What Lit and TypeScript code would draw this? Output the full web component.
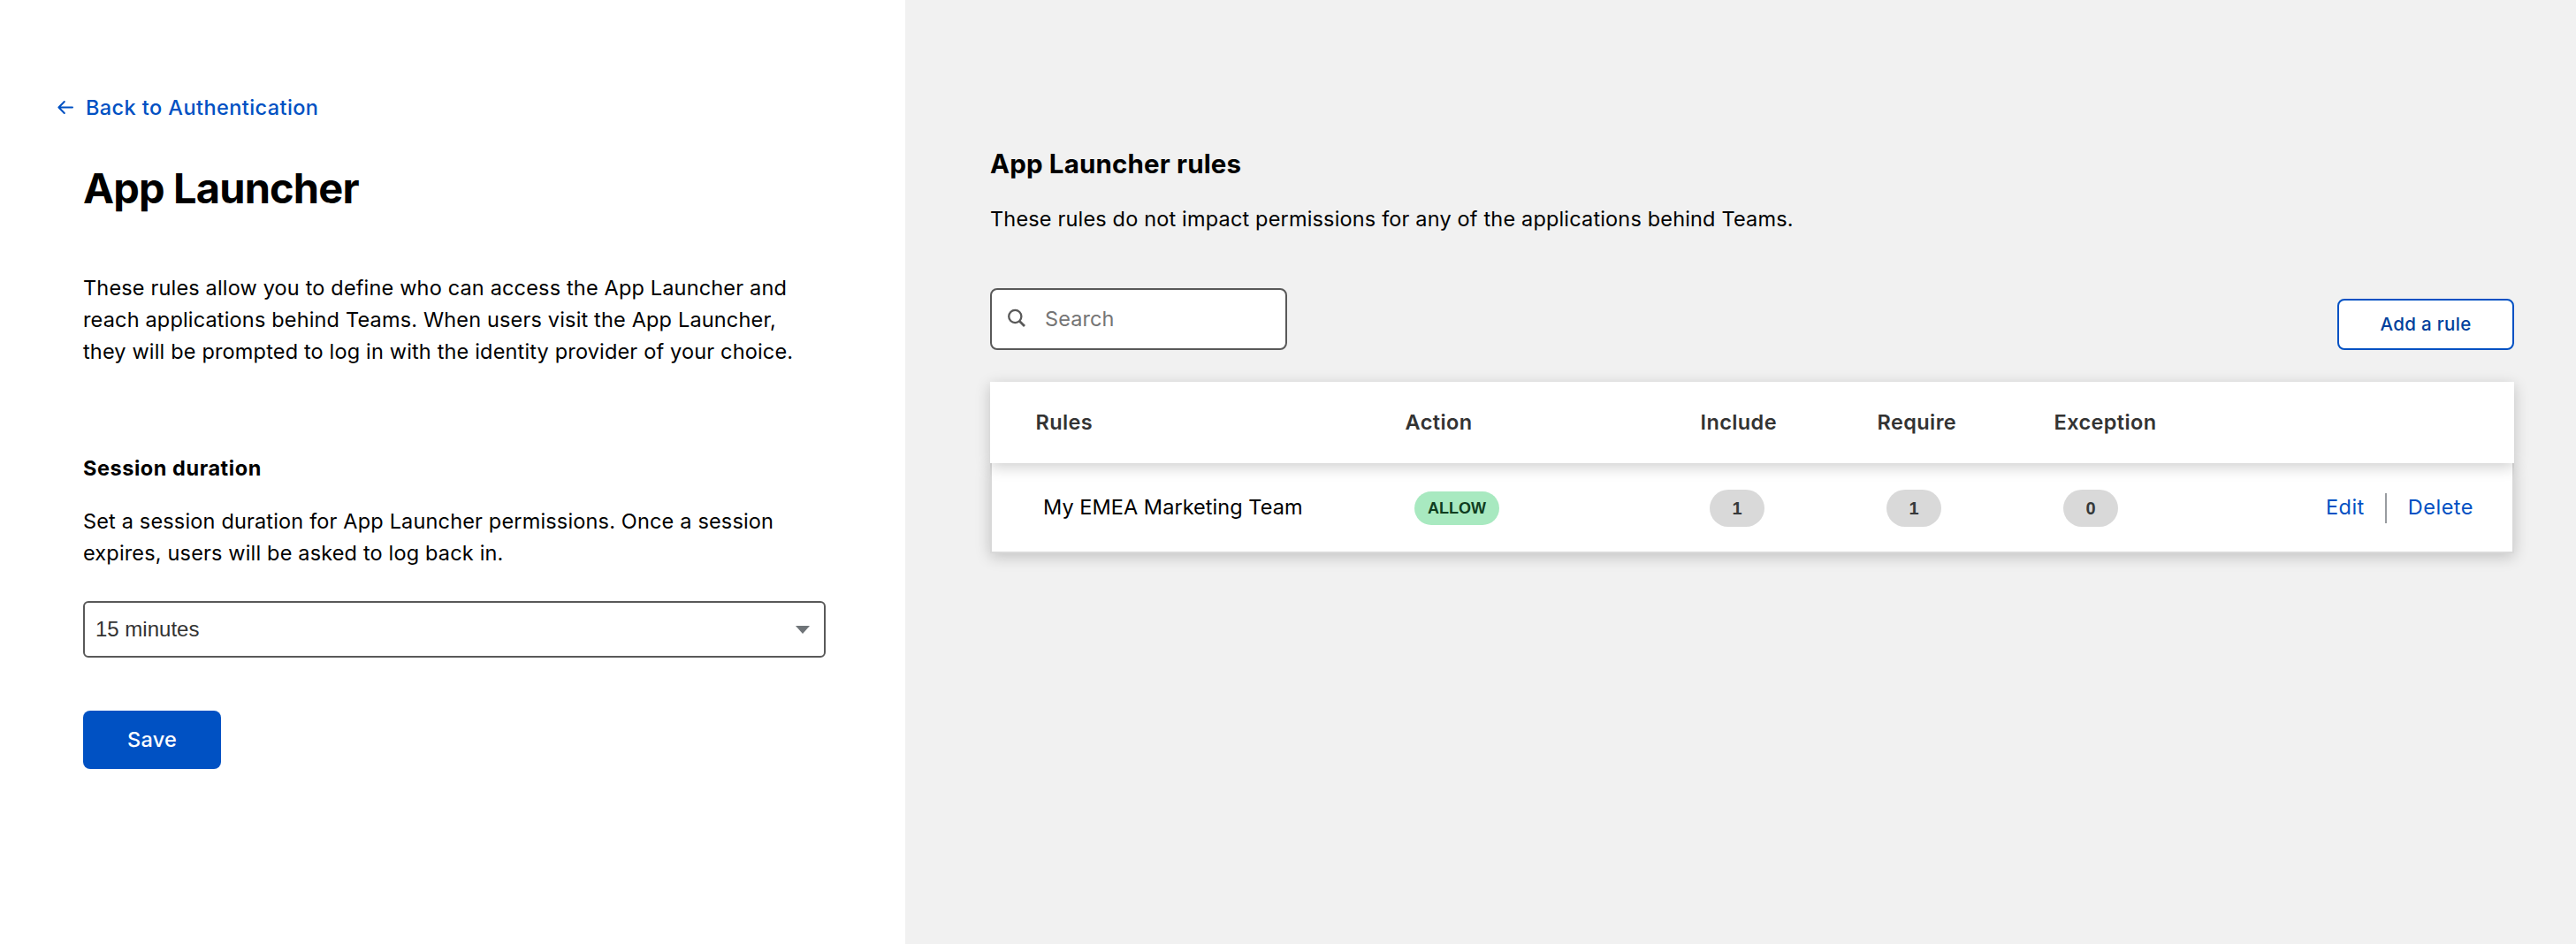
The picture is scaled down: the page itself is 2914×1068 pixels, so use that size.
import { LitElement, html, css } from "lit";
import { customElement, state } from "lit/decorators.js";

interface Rule {
  name: string;
  action: string;
  include: number;
  require: number;
  exception: number;
}

@customElement("session-panel")
export class SessionPanel extends LitElement {
  static styles = css`
    :host {
      display: block;
      background: #fff;
      padding: 104px 90px 0 94px;
      letter-spacing: 0.165px;
    }
    * { box-sizing: border-box; }
    h1, h2, p { margin: 0; }
    .back {
      display: flex;
      align-items: center;
      gap: 13px;
      margin-left: -30px;
      height: 36px;
      color: #0051c3;
      font-weight: 500;
      letter-spacing: 0.42px;
      text-decoration: none;
    }
    .arrow { display: block; width: 20px; height: 20px; }
    h1 {
      margin-top: 45px;
      font-size: 47px;
      line-height: 56px;
      font-weight: 700;
      letter-spacing: -0.85px;
    }
    .intro { margin-top: 67px; white-space: nowrap; }
    h2 {
      margin-top: 96px;
      font-size: inherit;
      font-weight: 700;
      letter-spacing: 0.55px;
    }
    .help { margin-top: 24px; white-space: nowrap; }
    .select {
      display: flex;
      align-items: center;
      justify-content: space-between;
      margin-top: 36px;
      height: 64px;
      padding: 0 16px 0 12px;
      border: 2px solid #595959;
      border-radius: 6px;
      color: #333;
      font-family: "Liberation Sans", Arial, sans-serif;
      font-size: 24px;
      letter-spacing: 0;
    }
    .caret { display: block; width: 16px; height: 9px; }
    .save {
      display: block;
      margin-top: 60px;
      width: 156px;
      height: 66px;
      padding: 0;
      border: 0;
      border-radius: 8px;
      background: #0051c3;
      color: #fff;
      font: inherit;
      font-weight: 500;
      letter-spacing: 0.2px;
    }
  `;

  render() {
    return html`
      <a class="back">
        <svg class="arrow" viewBox="0 0 20 20" fill="none" stroke="#0051c3" stroke-width="2" stroke-linecap="round" stroke-linejoin="round">
          <path d="M18 9.5H2.4M8.8 3 2.4 9.5 8.8 16"></path>
        </svg>
        <span>Back to Authentication</span>
      </a>
      <h1>App Launcher</h1>
      <p class="intro">
        These rules allow you to define who can access the App Launcher and<br />
        reach applications behind Teams. When users visit the App Launcher,<br />
        they will be prompted to log in with the identity provider of your choice.
      </p>
      <h2>Session duration</h2>
      <p class="help">
        Set a session duration for App Launcher permissions. Once a session<br />
        expires, users will be asked to log back in.
      </p>
      <div class="select">
        <span>15 minutes</span>
        <svg class="caret" viewBox="0 0 16 9"><path d="M0 0H16L8 9Z" fill="#6f7478"></path></svg>
      </div>
      <button class="save">Save</button>
    `;
  }
}

@customElement("rules-panel")
export class RulesPanel extends LitElement {
  static styles = css`
    :host {
      display: block;
      background: #f1f1f1;
      padding: 167px 70px 0 96px;
      letter-spacing: 0.165px;
    }
    * { box-sizing: border-box; }
    h2, p { margin: 0; }
    h2 {
      font-size: 29.5px;
      line-height: 36px;
      font-weight: 700;
      letter-spacing: 0.15px;
    }
    p { margin-top: 27px; }
    .toolbar {
      display: flex;
      justify-content: space-between;
      align-items: flex-end;
      margin-top: 60px;
      height: 70px;
    }
    .search {
      display: flex;
      align-items: center;
      gap: 22px;
      width: 336px;
      height: 70px;
      padding-left: 18px;
      border: 2px solid #595959;
      border-radius: 8px;
      background: #fff;
      color: #757575;
      letter-spacing: 0.1px;
    }
    .glass { display: block; width: 20px; height: 22px; margin-top: -2px; }
    .add {
      width: 200px;
      height: 58px;
      padding: 0;
      border: 2px solid #0051c3;
      border-radius: 8px;
      background: #fff;
      color: #003f9c;
      font: inherit;
      font-size: 20.5px;
      font-weight: 500;
      letter-spacing: 0.33px;
    }
    .table { margin-top: 36px; }
    .head, .row {
      display: grid;
      align-items: center;
      grid-template-columns: 418px 334px 200px 200px 200px 1fr;
      box-shadow: 0 4px 16px rgba(0, 0, 0, 0.2);
      background: #fff;
    }
    .head {
      position: relative;
      height: 92px;
      padding-left: 51.5px;
      color: #333;
      font-weight: 600;
      letter-spacing: 0.4px;
    }
    .row {
      grid-template-columns: 420px 334px 200px 200px 200px 1fr;
      height: 102px;
      padding: 0 44px 0 58px;
      border: 2px solid #d9d9d9;
      border-top: 0;
    }
    .name { letter-spacing: 0.05px; }
    .action, .count {
      justify-self: start;
      display: flex;
      align-items: center;
      justify-content: center;
      margin-top: 2px;
      font-family: "Liberation Sans", Arial, sans-serif;
      font-weight: 700;
      letter-spacing: 0;
    }
    .action {
      width: 96px;
      height: 38px;
      padding-bottom: 1px;
      border-radius: 19px;
      background: #a8e9c0;
      color: #0f3d20;
      font-size: 18px;
    }
    .count {
      width: 62px;
      height: 42px;
      border-radius: 21px;
      background: #d9d9d9;
      color: #36393a;
      font-size: 20px;
    }
    .links {
      display: flex;
      justify-content: flex-end;
      align-items: center;
      color: #0051c3;
      letter-spacing: 0.5px;
    }
    .bar {
      width: 2px;
      height: 34px;
      margin: 2px 24px 0 23px;
      background: #999ca0;
    }
  `;

  @state() private rules: Rule[] = [
    { name: "My EMEA Marketing Team", action: "ALLOW", include: 1, require: 1, exception: 0 },
  ];

  render() {
    return html`
      <h2>App Launcher rules</h2>
      <p>These rules do not impact permissions for any of the applications behind Teams.</p>
      <div class="toolbar">
        <div class="search">
          <svg class="glass" viewBox="0 0 20 22" fill="none" stroke="#595959" stroke-width="2.3">
            <circle cx="8.3" cy="9" r="7.1"></circle>
            <path d="M13.2 14.2 19 20" stroke-width="2.8"></path>
          </svg>
          <span>Search</span>
        </div>
        <button class="add">Add a rule</button>
      </div>
      <div class="table">
        <div class="head">
          <span>Rules</span><span>Action</span><span>Include</span><span>Require</span><span>Exception</span>
        </div>
        ${this.rules.map(
          (r) => html`
            <div class="row">
              <span class="name">${r.name}</span>
              <span class="action">${r.action}</span>
              <span class="count">${r.include}</span>
              <span class="count">${r.require}</span>
              <span class="count">${r.exception}</span>
              <div class="links"><span>Edit</span><span class="bar"></span><span>Delete</span></div>
            </div>
          `
        )}
      </div>
    `;
  }
}

@customElement("app-root")
export class AppRoot extends LitElement {
  static styles = css`
    :host {
      display: grid;
      grid-template-columns: 1024px 1fr;
      height: 1068px;
      background: #fff;
      color: #000;
      font-family: Inter, "Liberation Sans", sans-serif;
      font-size: 23.5px;
      line-height: 36px;
    }
  `;

  render() {
    return html`<session-panel></session-panel><rules-panel></rules-panel>`;
  }
}
